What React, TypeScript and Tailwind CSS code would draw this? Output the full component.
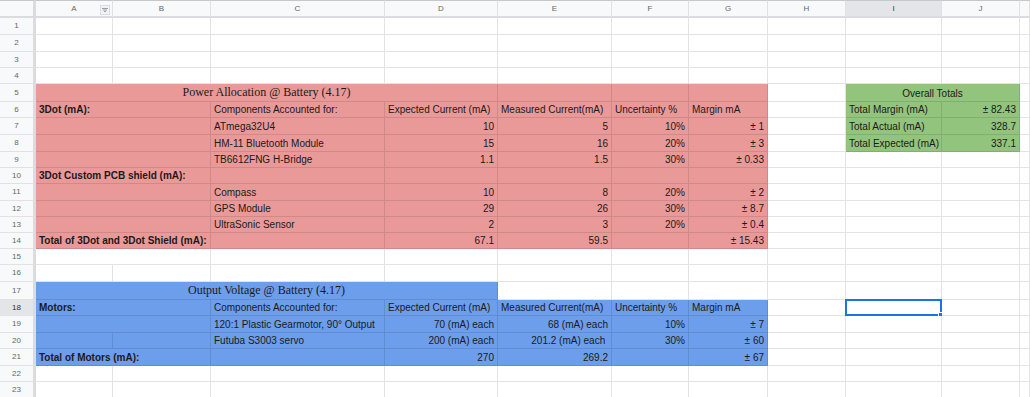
import React from "react";

type Cell = { t?: string; s?: number; bg?: "p" | "b" | "g"; r?: boolean; c?: boolean; b?: boolean; serif?: boolean; sel?: boolean };

const SPAN: Record<number, string> = { 1: "col-span-1", 2: "col-span-2", 3: "col-span-3", 4: "col-span-4" };
const BG: Record<string, string> = { p: "bg-[#ea9999]", b: "bg-[#6d9eeb]", g: "bg-[#93c47d]" };

const P = (t?: string, o: Partial<Cell> = {}): Cell => ({ t, bg: "p", ...o });
const B = (t?: string, o: Partial<Cell> = {}): Cell => ({ t, bg: "b", ...o });
const G = (t?: string, o: Partial<Cell> = {}): Cell => ({ t, bg: "g", ...o });
const W = (o: Partial<Cell> = {}): Cell => ({ ...o });

const pad = (cells: Cell[]): Cell[] => {
  const used = cells.reduce((a, c) => a + (c.s || 1), 0);
  const out = [...cells];
  for (let i = used; i < 11; i++) out.push(W());
  return out;
};

const blankAB = (): Cell[] => [W(), W()];

const ROWS: Cell[][] = [
  pad([]),
  pad([]),
  pad([]),
  pad([]),
  pad([
    P("Power Allocation @ Battery (4.17)", { s: 4, c: true, serif: true }),
    P(), P(), P(), W(),
    G("Overall Totals", { s: 2, c: true }),
  ]),
  pad([
    P("3Dot (mA):", { s: 2, b: true }),
    P("Components Accounted for:"),
    P("Expected Current (mA)"),
    P("Measured Current(mA)"),
    P("Uncertainty %"),
    P("Margin mA"),
    W(),
    G("Total Margin (mA)"),
    G("± 82.43", { r: true }),
  ]),
  pad([P(undefined, { s: 2 }), P("ATmega32U4"), P("10", { r: true }), P("5", { r: true }), P("10%", { r: true }), P("± 1", { r: true }), W(), G("Total Actual (mA)"), G("328.7", { r: true })]),
  pad([P(undefined, { s: 2 }), P("HM-11 Bluetooth Module"), P("15", { r: true }), P("16", { r: true }), P("20%", { r: true }), P("± 3", { r: true }), W(), G("Total Expected (mA)"), G("337.1", { r: true })]),
  pad([P(undefined, { s: 2 }), P("TB6612FNG H-Bridge"), P("1.1", { r: true }), P("1.5", { r: true }), P("30%", { r: true }), P("± 0.33", { r: true })]),
  pad([P("3Dot Custom PCB shield (mA):", { s: 2, b: true }), P(), P(), P(), P(), P()]),
  pad([P(undefined, { s: 2 }), P("Compass"), P("10", { r: true }), P("8", { r: true }), P("20%", { r: true }), P("± 2", { r: true })]),
  pad([P(undefined, { s: 2 }), P("GPS Module"), P("29", { r: true }), P("26", { r: true }), P("30%", { r: true }), P("± 8.7", { r: true })]),
  pad([P(undefined, { s: 2 }), P("UltraSonic Sensor"), P("2", { r: true }), P("3", { r: true }), P("20%", { r: true }), P("± 0.4", { r: true })]),
  pad([P("Total of 3Dot and 3Dot Shield (mA):", { s: 2, b: true }), P(), P("67.1", { r: true }), P("59.5", { r: true }), P(), P("± 15.43", { r: true })]),
  pad([W({ s: 2 })]),
  pad([]),
  pad([B("Output Voltage @ Battery (4.17)", { s: 4, c: true, serif: true })]),
  pad([
    B("Motors:", { s: 2, b: true }),
    B("Components Accounted for:"),
    B("Expected Current (mA)"),
    B("Measured Current(mA)"),
    B("Uncertainty %"),
    B("Margin mA"),
    W(),
    W({ sel: true }),
  ]),
  pad([B(undefined, { s: 2 }), B("120:1 Plastic Gearmotor, 90° Output"), B("70 (mA) each", { r: true }), B("68 (mA) each", { r: true }), B("10%", { r: true }), B("± 7", { r: true })]),
  pad([B(), B(), B("Futuba S3003 servo"), B("200 (mA) each", { r: true }), B("201.2 (mA) each\u00a0", { r: true }), B("30%", { r: true }), B("± 60", { r: true })]),
  pad([B("Total of Motors (mA):", { s: 2, b: true }), B(), B("270", { r: true }), B("269.2", { r: true }), B(), B("± 67", { r: true })]),
  pad([]),
  pad([]),
];

const LETTERS = ["A", "B", "C", "D", "E", "F", "G", "H", "I", "J", ""];

function FilterIcon() {
  return (
    <div className="absolute right-[2px] top-[4px] w-[10px] h-[10px] border border-[#dadce0] bg-[#f1f3f4] flex items-center justify-center">
      <svg width="6" height="5" viewBox="0 0 6 5">
        <path d="M0 0.5h6M1 2h4M2 3.5h2" stroke="#9aa0a6" strokeWidth="1" />
      </svg>
    </div>
  );
}

export default function App() {
  return (
    <div
      className="w-[1030px] h-[397px] overflow-hidden bg-white grid grid-cols-[36px_77px_98px_174px_113px_114px_77px_79px_78px_96px_78px_1fr] grid-rows-[18px_17px_17px_16px_16px_18px_16px_17px_17px_16px_16px_17px_16px_16px_16px_16px_17px_18px_16px_17px_16px_17px_16px_16px]"
      style={{ fontFamily: '"Liberation Sans", Arial, sans-serif' }}
    >
      {/* header row */}
      <div className="bg-[#f8f9fa] border-t border-t-[#c7c7c7] border-r-[3px] border-r-[#dadce0] border-b-2 border-b-[#dadce0]" />
      {LETTERS.map((l, i) => (
        <div
          key={"h" + i}
          className={`relative flex items-center justify-center text-[8px] border-t border-t-[#c7c7c7] border-r border-r-[#e1e1e1] border-b-2 border-b-[#dadce0] ${
            l === "I" ? "bg-[#e3e5e8] text-[#333]" : "bg-[#f8f9fa] text-[#666]"
          }`}
        >
          {l}
          {l === "A" && <FilterIcon />}
        </div>
      ))}
      {ROWS.map((row, ri) => (
        <React.Fragment key={"r" + ri}>
          <div
            className={`flex items-center justify-center text-[8px] border-r-[3px] border-r-[#dadce0] border-b border-b-[#e1e1e1] ${
              ri === 17 ? "bg-[#e3e5e8] text-[#333]" : "bg-[#f8f9fa] text-[#666]"
            }`}
          >
            {ri + 1}
          </div>
          {row.map((c, ci) => (
            <div
              key={ci}
              className={`relative flex items-end overflow-visible whitespace-nowrap px-[3px] pb-[1px] border-r border-b border-[rgba(0,0,0,0.11)] ${SPAN[c.s || 1]} ${
                c.bg ? BG[c.bg] : "bg-white"
              } ${c.r ? "justify-end" : c.c ? "justify-center" : "justify-start"} ${
                c.serif ? "text-[12px] leading-[14px] pb-[2px]" : "text-[10px] leading-[12px]"
              } ${c.b ? "font-bold" : ""} text-[#1a1a1a]`}
              style={c.serif ? { fontFamily: '"Liberation Serif", "Times New Roman", serif' } : undefined}
            >
              {c.t}
              {c.sel && (
                <div className="absolute -left-px -top-px w-[97px] h-[17px] border-2 border-[#1a73e8]">
                  <div className="absolute -right-[4px] -bottom-[4px] w-[6px] h-[6px] bg-[#1a73e8] border border-white" />
                </div>
              )}
            </div>
          ))}
        </React.Fragment>
      ))}
    </div>
  );
}
